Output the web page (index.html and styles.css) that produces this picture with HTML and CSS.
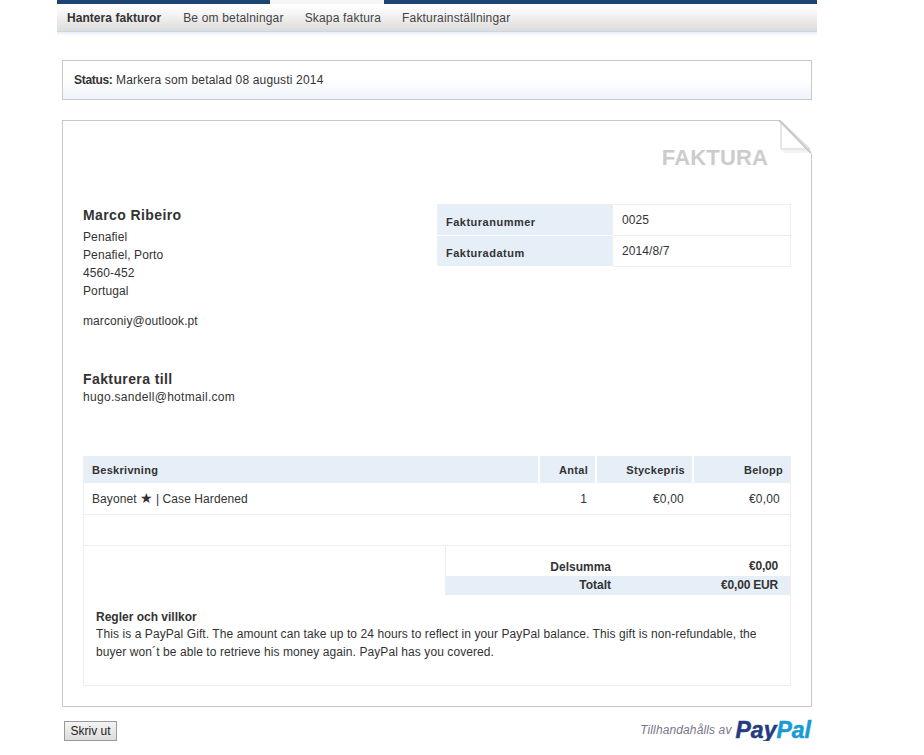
FILE: index.html
```html
<!doctype html>
<html lang="sv">
<head>
    <meta charset="UTF-8">
    <title>Faktura</title>
    <link rel="stylesheet" href="styles.css">
</head>
<body>
    <div class="page">
        <div class="topbar"><div class="topbar-tab"></div></div>
        <div class="nav">
            <a class="nav-item active">Hantera fakturor</a>
            <a class="nav-item">Be om betalningar</a>
            <a class="nav-item">Skapa faktura</a>
            <a class="nav-item">Fakturainställningar</a>
        </div>
        <div class="nav-fade"></div>

        <div class="status"><b>Status:</b> Markera som betalad 08 augusti 2014</div>

        <div class="invoice">
            <svg class="fold" width="33" height="34" viewBox="0 0 33 34">
                <polygon points="0,0 33,0 33,34" fill="#fff"/>
                <polygon points="2,1 2,29 31,29" fill="#fff" stroke="#cfcfcf"/>
                <polygon points="2,30 31,30 28,33 6,33" fill="#f3f3f3"/>
                <line x1="0" y1="0" x2="32" y2="33" stroke="#c8c8c8" stroke-width="2"/>
            </svg>
            <h1 class="title">FAKTURA</h1>

            <div class="top">
                <div class="merchant">
                    <h2 class="name">Marco Ribeiro</h2>
                    <p class="address">Penafiel<br>Penafiel, Porto<br>4560-452<br>Portugal</p>
                    <p class="email">marconiy@outlook.pt</p>
                </div>
                <table class="meta">
                    <tr>
                        <th>Fakturanummer</th>
                        <td>0025</td>
                    </tr>
                    <tr>
                        <th>Fakturadatum</th>
                        <td>2014/8/7</td>
                    </tr>
                </table>
            </div>

            <div class="bill-to">
                <h2 class="name">Fakturera till</h2>
                <p>hugo.sandell@hotmail.com</p>
            </div>

            <div class="items-box">
                <table class="items">
                    <tr class="items-head">
                        <th class="col-desc">Beskrivning</th>
                        <th class="col-qty">Antal</th>
                        <th class="col-price">Styckepris</th>
                        <th class="col-sum">Belopp</th>
                    </tr>
                    <tr class="item-row">
                        <td class="desc">Bayonet <span class="star">★</span> | Case Hardened</td>
                        <td class="num">1</td>
                        <td class="num">€0,00</td>
                        <td class="num last">€0,00</td>
                    </tr>
                    <tr class="item-row">
                        <td></td>
                        <td></td>
                        <td></td>
                        <td></td>
                    </tr>
                </table>

                <div class="totals">
                    <div class="total-row sub">
                        <span class="total-label">Delsumma</span>
                        <span class="total-value">€0,00</span>
                    </div>
                    <div class="total-row grand">
                        <span class="total-label">Totalt</span>
                        <span class="total-value">€0,00 EUR</span>
                    </div>
                </div>

                <div class="terms">
                    <b>Regler och villkor</b>
                    <p>This is a PayPal Gift. The amount can take up to 24 hours to reflect in your PayPal balance. This gift is non-refundable, the buyer won´t be able to retrieve his money again. PayPal has you covered.</p>
                </div>
            </div>
        </div>

        <div class="footer">
            <button class="print">Skriv ut</button>
            <div class="powered">
                <span class="powered-text">Tillhandahålls av</span>
                <span class="logo"><span class="logo-pay">Pay</span><span class="logo-pal">Pal</span></span>
            </div>
        </div>
    </div>
</body>
</html>
```

FILE: styles.css
```css
* {
    margin: 0;
    padding: 0;
    box-sizing: border-box;
}

body {
    background: #fff;
    color: #333;
    font-family: "Liberation Sans", Arial, sans-serif;
    font-size: 12px;
    line-height: 18px;
}

.page {
    width: 760px;
    margin-left: 57px;
}

.topbar {
    height: 4px;
    background-color: #1c4572;
}

.topbar-tab {
    width: 114px;
    height: 4px;
    margin-left: 213px;
    background-color: #f6f6f6;
}

.nav {
    display: flex;
    height: 26px;
    margin-top: 2px;
    padding: 3px 0 0 10px;
    background: linear-gradient(#fff, #f3f3f3 35%, #dcdcdc);
    border-bottom: 1px solid #c9d6e4;
}

.nav-item {
    margin-right: 21px;
    color: #444;
    letter-spacing: .18px;
}

.nav-item.active {
    margin-right: 22px;
    color: #333;
    font-weight: bold;
    letter-spacing: .05px;
}

.nav-fade {
    height: 4px;
    background: linear-gradient(#e8eef5, #fff);
}

.status {
    height: 40px;
    margin: 24px 5px 0;
    padding: 10px 11px;
    border: 1px solid #c8c8c8;
    background: linear-gradient(#fff 50%, #eef3fa);
    letter-spacing: .17px;
}

.status b {
    letter-spacing: -.3px;
}

.invoice {
    position: relative;
    height: 587px;
    margin: 20px 5px 0;
    padding: 0 20px;
    border: 1px solid #c8c8c8;
}

.fold {
    position: absolute;
    top: -1px;
    right: -1px;
}

.title {
    padding: 22px 23px 0 0;
    color: #ccc;
    font-size: 22px;
    line-height: 30px;
    letter-spacing: .15px;
    text-align: right;
}

.top {
    display: flex;
    justify-content: space-between;
    margin-top: 31px;
}

.name {
    font-size: 14px;
    line-height: 20px;
    letter-spacing: .4px;
}

.merchant {
    padding-top: 1px;
}

.address {
    margin-top: 3px;
    letter-spacing: .1px;
}

.email {
    margin-top: 12px;
    letter-spacing: .1px;
}

.meta {
    width: 354px;
    height: 63px;
    border-collapse: collapse;
}

.meta th {
    width: 175px;
    padding: 3px 8px 0;
    background-color: #e6eef8;
    border: 1px solid #eee;
    border-right: 0;
    border-bottom: 1px solid #fff;
    font-size: 11px;
    letter-spacing: .5px;
    text-align: left;
}

.meta td {
    padding: 0 8px 1px 9px;
    border: 1px solid #eee;
    letter-spacing: .1px;
}

.bill-to {
    margin-top: 39px;
}

.bill-to p {
    padding-top: 1px;
    line-height: 14px;
    letter-spacing: .3px;
}

.items-box {
    height: 230px;
    margin-top: 52px;
    border: 1px solid #eee;
    border-top: 0;
}

.items {
    width: 100%;
    border-collapse: collapse;
}

.items-head th {
    height: 27px;
    padding: 0 7px 0 8px;
    background-color: #e6eef8;
    border-left: 2px solid #fff;
    font-size: 11px;
    letter-spacing: .3px;
    text-align: right;
}

.items-head .col-desc {
    border-left: 0;
    text-align: left;
}

.col-qty {
    width: 57px;
}

.col-price {
    width: 97px;
}

.col-sum {
    width: 97px;
}

.item-row td {
    height: 31px;
    padding: 1px 8px 0;
    border-bottom: 1px solid #eee;
    letter-spacing: .2px;
}

.item-row .desc {
    letter-spacing: .08px;
}

.item-row .num {
    padding-right: 9px;
    text-align: right;
}

.item-row .last {
    padding-right: 10px;
}

.star {
    font-family: "DejaVu Sans", sans-serif;
    font-size: 14px;
    line-height: 1;
    letter-spacing: 0;
}

.totals {
    margin-left: 361px;
    padding-top: 10px;
    border-left: 1px solid #eee;
}

.total-row {
    display: flex;
    height: 20px;
    font-weight: bold;
}

.total-row.sub .total-label {
    padding-top: 2px;
}

.total-row.sub .total-value {
    padding-top: 1px;
}

.total-row.grand {
    height: 19px;
    background-color: #e6eef8;
}

.total-label {
    width: 165px;
    text-align: right;
}

.total-value {
    flex: 1;
    padding-right: 12px;
    letter-spacing: -.2px;
    text-align: right;
}

.terms {
    padding: 14px 12px 0;
    letter-spacing: .08px;
}

.terms b {
    display: block;
    line-height: 16px;
    letter-spacing: 0;
}

.footer {
    display: flex;
    justify-content: space-between;
    align-items: center;
    margin: 14px 6px 0 7px;
}

.print {
    width: 53px;
    height: 20px;
    background: linear-gradient(#f4f4f4, #dcdcdc);
    border: 1px solid #9a9a9a;
    color: #222;
    font-family: "Liberation Sans", Arial, sans-serif;
    font-size: 12px;
}

.powered {
    display: flex;
    align-items: center;
    gap: 4px;
    height: 20px;
    color: #778;
    font-size: 12px;
    font-style: italic;
}

.powered-text {
    padding-bottom: 3px;
    letter-spacing: .12px;
}

.logo {
    padding-bottom: 3px;
    font-size: 23px;
    font-weight: bold;
    -webkit-text-stroke: .5px;
}

.logo-pay {
    color: #253b80;
}

.logo-pal {
    color: #179bd7;
}
```
